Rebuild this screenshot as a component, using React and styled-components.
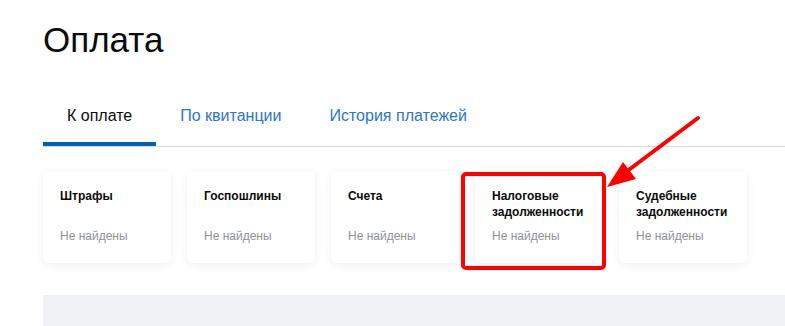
import styled, { createGlobalStyle } from 'styled-components';

const GlobalStyle = createGlobalStyle`
    * {
        box-sizing: border-box;
    }

    body {
        margin: 0;
        background: #ffffff;
        font-family: "Liberation Sans", Arial, sans-serif;
        overflow: hidden;
    }
`;

const tabs = [
    { title: 'К оплате', active: true },
    { title: 'По квитанции' },
    { title: 'История платежей' },
];

const cards = [
    { title: 'Штрафы' },
    { title: 'Госпошлины' },
    { title: 'Счета' },
    { title: 'Налоговые задолженности' },
    { title: 'Судебные задолженности' },
];

function App() {
    return (
        <Page>
            <GlobalStyle />
            <Title>Оплата</Title>

            <Tabs>
                {tabs.map(tab => (
                    <Tab key={tab.title} active={tab.active}>{tab.title}</Tab>
                ))}
            </Tabs>

            <Cards>
                {cards.map(card => (
                    <Card key={card.title}>
                        <h4>{card.title}</h4>
                        <p>Не найдены</p>
                    </Card>
                ))}
            </Cards>

            <Panel />

            <Annotation width="785" height="326" viewBox="0 0 785 326">
                <rect x="463" y="174" width="141" height="94" rx="3" fill="none" stroke="#ff0000" strokeWidth="4" />
                <line x1="698" y1="118" x2="626" y2="172" stroke="#ff0000" strokeWidth="4" strokeLinecap="round" />
                <polygon points="607,187 623,162 636,179" fill="#ff0000" />
            </Annotation>
        </Page>
    );
}

export default App;

const Page = styled.div`
    position: relative;
    width: 785px;
    height: 326px;
    padding-left: 43px;
    overflow: hidden;
`;

const Title = styled.h1`
    margin: 19px 0 0;
    font-size: 35px;
    font-weight: 400;
    line-height: 42px;
    color: #0b0b0b;
`;

const Tabs = styled.div`
    display: flex;
    margin-top: 25px;
    border-bottom: 1px solid #d6d9e0;
`;

const Tab = styled.div`
    padding: 21px 24px 17px;
    font-size: 16px;
    line-height: 18px;
    color: ${({ active }) => active ? '#0b0b0b' : '#2a77c9'};
    border-bottom: 4px solid ${({ active }) => active ? '#0062b0' : 'transparent'};
    cursor: pointer;
`;

const Cards = styled.div`
    display: flex;
    gap: 16px;
    margin-top: 24px;
`;

const Card = styled.div`
    display: flex;
    flex-direction: column;
    flex-shrink: 0;
    width: 128px;
    height: 92px;
    padding: 16px 17px;
    background: #ffffff;
    border-radius: 6px;
    box-shadow: 0 2px 10px rgba(0, 0, 0, 0.07);

    h4 {
        margin: 0;
        height: 36px;
        font-size: 12px;
        font-weight: 700;
        line-height: 16px;
        color: #0b0b0b;
        padding-top: 1px;
    }

    p {
        margin: 5px 0 0;
        font-size: 12px;
        line-height: 16px;
        color: #8e9196;
    }
`;

const Panel = styled.div`
    margin-top: 32px;
    height: 40px;
    background: #f1f2f6;
`;

const Annotation = styled.svg`
    position: absolute;
    left: 0;
    top: 0;
    pointer-events: none;
`;
